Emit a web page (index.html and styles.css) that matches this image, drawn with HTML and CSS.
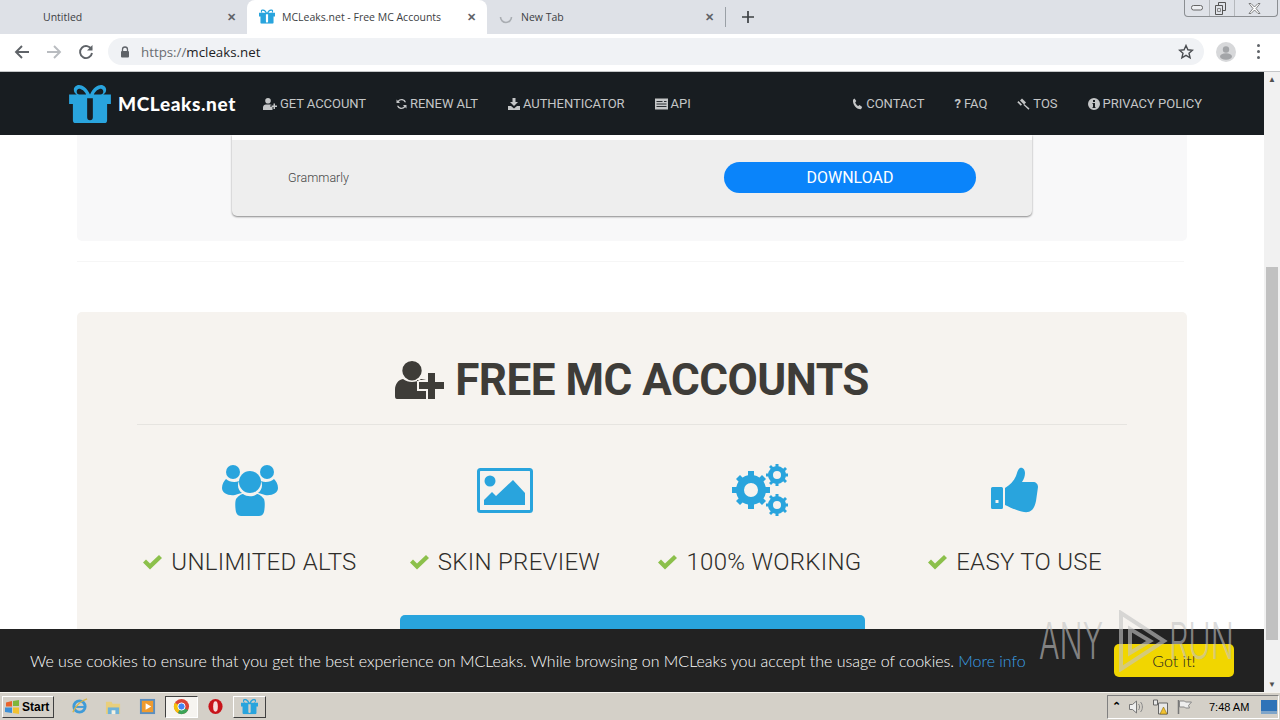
FILE: index.html
```html
<!DOCTYPE html>
<html lang="en">

<head>
    <meta charset="UTF-8" />
    <title>MCLeaks.net - Free MC Accounts</title>
    <link rel="stylesheet" href="styles.css">
</head>

<body>

    <div class="tabstrip">
        <div class="tab tab-first">
            <span class="tab-title tab-title-first">Untitled</span>
            <span class="tab-close">✕</span>
        </div>
        <div class="tab tab-active">
            <svg class="gift-small" viewBox="0 0 44 40"><use href="#gift" /></svg>
            <span class="tab-title">MCLeaks.net - Free MC Accounts</span>
            <span class="tab-close">✕</span>
        </div>
        <div class="tab tab-new">
            <svg class="spinner" viewBox="0 0 14 14"><path d="M1.5 7a5.5 5.5 0 0 0 11 0" fill="none" stroke="#a9adb2" stroke-width="1.6" /></svg>
            <span class="tab-title">New Tab</span>
            <span class="tab-close">✕</span>
        </div>
        <div class="tab-sep"></div>
        <svg class="new-tab" viewBox="0 0 12 12"><path d="M6 0v12M0 6h12" stroke="#3c4043" stroke-width="1.7" /></svg>
        <div class="win-buttons">
            <span class="win-btn win-min"><svg width="12" height="6" viewBox="0 0 12 6"><rect x=".5" y=".5" width="11" height="4.500" rx="2" fill="#eef0f3" stroke="#666" /></svg></span>
            <span class="win-btn win-max"><svg width="11" height="13" viewBox="0 0 11 13"><path d="M3.500 3V.5h7v8H8M.5 3.500h7v9h-7z" fill="none" stroke="#555" /><path d="M2.500 6.500h3v3h-3z" fill="none" stroke="#888" /></svg></span>
            <span class="win-btn win-close"><svg width="13" height="11" viewBox="0 0 13 11"><path d="M1 .5h2l3.500 3.500L10 .5h2L8 5.500l4 5h-2L6.500 7 3 10.500H1l4-5z" fill="#fff" stroke="#666" stroke-width=".8" /></svg></span>
        </div>
    </div>

    <div class="toolbar">
        <svg class="tool-icon" viewBox="0 0 16 16"><path d="M15 8H2M8 2 2 8l6 6" fill="none" stroke="#5f6368" stroke-width="1.900" /></svg>
        <svg class="tool-icon" viewBox="0 0 16 16"><path d="M1 8h13M8 2l6 6-6 6" fill="none" stroke="#b9bcc0" stroke-width="1.900" /></svg>
        <svg class="tool-icon" viewBox="0 0 16 16"><path d="M13.500 5.500A6 6 0 1 0 14 9" fill="none" stroke="#5f6368" stroke-width="1.900" /><path d="M14.500 1v5.500H9z" fill="#5f6368" /></svg>
        <div class="omnibox">
            <svg class="lock" viewBox="0 0 10 12"><path d="M2.500 5V3.500a2.500 2.500 0 0 1 5 0V5" fill="none" stroke="#5f6368" stroke-width="1.300" /><rect x="1" y="5" width="8" height="6.500" rx="1" fill="#5f6368" /></svg>
            <span class="url"><span class="url-scheme">https://</span>mcleaks.net</span>
            <svg class="star" viewBox="0 0 16 16"><path d="m8 1.500 1.900 4.300 4.600.4-3.500 3 1.100 4.600L8 11.400l-4.100 2.400L5 9.200l-3.500-3 4.600-.4z" fill="none" stroke="#4a4d51" stroke-width="1.400" /></svg>
        </div>
        <svg class="avatar" viewBox="0 0 20 20"><circle cx="10" cy="10" r="10" fill="#d7d8da" /><circle cx="10" cy="7.500" r="3.200" fill="#a3a5a8" /><ellipse cx="10" cy="14.500" rx="6" ry="3.200" fill="#a3a5a8" /></svg>
        <div class="kebab"><i></i><i></i><i></i></div>
    </div>

    <div class="viewport">
        <div class="site">
            <header class="navbar">
                <a class="logo">
                    <svg class="gift" viewBox="0 0 44 40"><use href="#gift" /></svg>
                    <span>MCLeaks.net</span>
                </a>
                <nav class="nav-left">
                    <a><svg viewBox="0 0 14 12"><path d="M5 0a2.800 2.800 0 1 1 0 5.600A2.800 2.800 0 0 1 5 0zM0 12V9.500C0 7.500 1.500 6.400 2.800 6.400h4.400c.7 0 1.300.2 1.800.6H7.500v2H9.500v3z" /><path d="M10.500 5.500h1.500v2h2V9h-2v2h-1.500V9h-2V7.500h2z" /></svg>GET ACCOUNT</a>
                    <a><svg viewBox="0.5 0 11 12"><path d="M10.600 4.300A4.800 4.800 0 0 0 2.300 2.700L1 1.400V5h3.600L3.300 3.700a3.400 3.400 0 0 1 5.800.6zM1.400 7.700a4.800 4.800 0 0 0 8.300 1.600l1.300 1.300V7H7.400l1.300 1.300a3.400 3.400 0 0 1-5.800-.6z" /></svg>RENEW ALT</a>
                    <a><svg viewBox="0.5 0 12 12"><path d="M5 0h3v4h2.500L6.500 8 2.500 4H5zM0 8h3.500l3 2.500 3-2.500H13v4H0z" /></svg>AUTHENTICATOR</a>
                    <a><svg viewBox="0 -0.5 13 12"><path d="M0 0h13v11H0z" /><path d="M1.500 3h6M1.500 5.500h10M1.500 8h10M9 3h2.500" stroke="#181d21" stroke-width=".9" /></svg>API</a>
                </nav>
                <nav class="nav-right">
                    <a><svg viewBox="0 0 11 12"><path d="M2.500.5 4.300 3 3.200 4.500c.5 1.400 1.600 2.800 3 3.600l1.400-1 2.600 2-1.200 2.200C4.200 11.500.5 6.500 1 1.800z" /></svg>CONTACT</a>
                    <a><span class="faq-mark">?</span>FAQ</a>
                    <a><svg viewBox="0 0 13 12"><path d="m5 .5 4 4-2 2-4-4zM1.500 3l3.500 3.500-1.200 1.200L.3 4.200zM7.200 6l5.300 4.500-1 1.200L6.500 7z" /></svg>TOS</a>
                    <a><svg viewBox="0 0 12 12"><path fill-rule="evenodd" d="M6 0a6 6 0 1 1 0 12A6 6 0 0 1 6 0zM5 2v2h2V2zM4.500 5v1H5v3h-.5v1h3V9H7V5z" /></svg>PRIVACY POLICY</a>
                </nav>
            </header>

            <main class="page">
                <section class="download-panel">
                    <div class="download-card">
                        <span class="download-name">Grammarly</span>
                        <a class="download-btn">DOWNLOAD</a>
                    </div>
                </section>

                <hr class="divider" />

                <section class="accounts">
                    <h1 class="accounts-title">
                        <svg viewBox="0 0 49 38"><path d="M17 0a9.700 9.700 0 1 1 0 19.400A9.700 9.700 0 0 1 17 0zM2 38c-1.500 0-2-1-2-3v-6c0-6 3-10 8-11 5 4 13 4 18 0 2 .5 4 .5 5 1H22v11h9v8z" /><path d="M33 12h7v9h9v7h-9v10h-7V28h-9v-7h9z" /></svg>
                        FREE MC ACCOUNTS
                    </h1>
                    <div class="features">
                        <div class="feature">
                            <svg class="feature-icon" viewBox="0 0 56 52"><circle cx="11" cy="8" r="7" /><circle cx="45" cy="8" r="7" /><path d="M4 15c3 3 9 4 13 2-2 4-1 9 3 12-3 1-5 1-7 2-7 1-13-2-13-7 0-4 2-7 4-9zM52 15c-3 3-9 4-13 2 2 4 1 9-3 12 3 1 5 1 7 2 7 1 13-2 13-7 0-4-2-7-4-9z" /><circle cx="28" cy="18" r="11" /><path d="M14 35c3-4 6-5 7-5 4 3 10 3 14 0 1 0 4 1 7 5 1 3 1 8 0 13-1 3-3 4-5 4H19c-2 0-4-1-5-4-1-5-1-10 0-13z" /></svg>
                            <div class="feature-label"><svg class="check" viewBox="0 0 21 16"><path d="M1 8.500 4 5.500 8 9.500 17 1l3 3L8 15.500z" /></svg>UNLIMITED ALTS</div>
                        </div>
                        <div class="feature">
                            <svg class="feature-icon" viewBox="0 -4 56 52"><rect x="1.500" y="1.500" width="53" height="42" rx="2" fill="none" stroke="#29a4dd" stroke-width="3" /><circle cx="13" cy="13" r="5.500" /><path d="M7 37v-5l8-8 4 4 17-16 12 13v12z" /></svg>
                            <div class="feature-label"><svg class="check" viewBox="0 0 21 16"><path d="M1 8.500 4 5.500 8 9.500 17 1l3 3L8 15.500z" /></svg>SKIN PREVIEW</div>
                        </div>
                        <div class="feature">
                            <svg class="feature-icon" viewBox="0 0 56 52"><circle cx="19" cy="26" r="11" fill="none" stroke="#29a4dd" stroke-width="8" /><path d="M16 7h6v6h-6zM16 39h6v6h-6zM0 23h6v6H0zM32 23h6v6h-6zM4 15l4-4 5 5-4 4zM25 36l4-4 5 5-4 4zM4 37l5-5 4 4-5 5zM25 16l5-5 4 4-5 5z" /><circle cx="45" cy="11" r="6.500" fill="none" stroke="#29a4dd" stroke-width="5" /><path d="M43.500 0h3v4h-3zM43.500 18h3v4h-3zM34 9.500h4v3h-4zM52 9.500h4v3h-4zM37 3l2-2 3 3-2 2zM50 16l2-2 3 3-2 2zM37 19l3-3 2 2-3 3zM50 6l3-3 2 2-3 3z" /><circle cx="45" cy="41" r="6.500" fill="none" stroke="#29a4dd" stroke-width="5" /><path d="M43.500 30h3v4h-3zM43.500 48h3v4h-3zM34 39.500h4v3h-4zM52 39.500h4v3h-4zM37 33l2-2 3 3-2 2zM50 46l2-2 3 3-2 2zM37 49l3-3 2 2-3 3zM50 36l3-3 2 2-3 3z" /></svg>
                            <div class="feature-label"><svg class="check" viewBox="0 0 21 16"><path d="M1 8.500 4 5.500 8 9.500 17 1l3 3L8 15.500z" /></svg>100% WORKING</div>
                        </div>
                        <div class="feature">
                            <svg class="feature-icon" viewBox="-4 -4 56 52"><path fill-rule="evenodd" d="M1.500 19h9a1.500 1.500 0 0 1 1.500 1.500v19a1.500 1.500 0 0 1-1.500 1.500h-9A1.500 1.500 0 0 1 0 39.500v-19A1.500 1.500 0 0 1 1.500 19zM4.500 32v3h3v-3z" /><path d="M14 20c5-3 9-7 11-12 1-3 2-7 4-8 3-1 5 2 5 5 0 3-1 6-3 9h11c3 0 5 2 5 5l-2 14c-1 5-3 10-8 11-5 1-15-3-23-7z" /></svg>
                            <div class="feature-label"><svg class="check" viewBox="0 0 21 16"><path d="M1 8.500 4 5.500 8 9.500 17 1l3 3L8 15.500z" /></svg>EASY TO USE</div>
                        </div>
                    </div>
                    <div class="get-btn"></div>
                </section>
            </main>
        </div>

        <div class="scrollbar">
            <span class="scroll-arrow">▲</span>
            <div class="scroll-track"><div class="scroll-thumb"></div></div>
            <span class="scroll-arrow">▼</span>
        </div>

        <div class="cookie-bar">
            <p class="cookie-text">We use cookies to ensure that you get the best experience on MCLeaks. While browsing on MCLeaks you accept the usage of cookies. <a>More info</a></p>
            <a class="cookie-btn">Got it!</a>
        </div>
    </div>

    <footer class="taskbar">
        <a class="start-btn">
            <svg viewBox="0 0 16 14"><path d="M1 2.500 7 1v5.500H1z" fill="#e8632c" /><path d="M8 1l6-1v6H8z" fill="#7fb53c" /><path d="M0 7.500h7V13l-7-1z" fill="#3d8fd6" /><path d="M8 7.500h6V14l-6-1z" fill="#f2c230" /></svg>
            Start
        </a>
        <div class="task-items">
            <span class="task-item"><svg viewBox="0 0 18 18"><circle cx="9" cy="9" r="6" fill="none" stroke="#3f9bd8" stroke-width="3" /><path d="M3 9.500h12" stroke="#3f9bd8" stroke-width="2" /><path d="M2 15C5 8 11 3 17 1" fill="none" stroke="#d9b64c" stroke-width="1.500" /></svg></span>
            <span class="task-item"><svg viewBox="0 0 18 18"><path d="M1 4h6l1 2h8v11H1z" fill="#e9cf7c" /><path d="M3 10h12v7H3z" fill="#6fb2d8" /><path d="M7 13h4v4H7z" fill="#f4f1e2" /></svg></span>
            <span class="task-item"><svg viewBox="0 0 18 18"><rect x="1" y="1" width="16" height="16" fill="#5b8fc0" /><rect x="3" y="3" width="12" height="12" fill="#ef9b2e" /><path d="M7 5.500v7l6-3.500z" fill="#fff" /></svg></span>
            <span class="task-item task-item-on"><svg viewBox="0 0 18 18"><circle cx="9" cy="9" r="8" fill="#db4437" /><path d="M9 9 16 13A8 8 0 0 1 5 16z" fill="#3ca457" /><path d="M9 9 5 16A8 8 0 0 1 2 5z" fill="#f4c20d" /><circle cx="9" cy="9" r="3.800" fill="#4285f4" stroke="#fff" /></svg></span>
            <span class="task-item"><svg viewBox="0 0 18 18"><ellipse cx="9" cy="9" rx="7.500" ry="8" fill="#c8141b" /><ellipse cx="9" cy="9" rx="2.500" ry="5.500" fill="#f6dcdc" /></svg></span>
            <span class="task-item task-item-app"><svg viewBox="0 0 44 40"><use href="#gift" /></svg></span>
        </div>
        <div class="tray">
            <span class="tray-chevron">⌃</span>
            <svg class="tray-icon" viewBox="0 0 16 16"><path d="M1 5.500h3L8 2v12L4 10.500H1z" fill="#eee" stroke="#777" /><path d="M10 5c1.500 1.500 1.500 4.500 0 6M12 3c2.500 2.500 2.500 7.500 0 10" fill="none" stroke="#888" /></svg>
            <svg class="tray-icon" viewBox="0 0 16 16"><path d="M1 1h4v5H1zM6 4h9v11H6z" fill="#e8e8e8" stroke="#666" /><path d="m11 8 3.500 7h-7z" fill="#f2c230" stroke="#8a6d10" stroke-width=".6" /></svg>
            <svg class="tray-icon" viewBox="0 0 16 16"><path d="M2 1v14" stroke="#777" stroke-width="1.500" /><path d="M3 2h5l1 1h6l-3 3.500 1 2.500H9L8 8H3z" fill="#eee" stroke="#888" /></svg>
            <span class="clock">7:48 AM</span>
            <span class="show-desktop"></span>
        </div>
    </footer>

    <div class="watermark">
        <span class="mark-word">ANY</span>
        <svg viewBox="0 0 50 62"><path d="M3 3v56l43-28zM12 19v24l20-12z" fill="none" stroke="currentColor" stroke-width="4" /></svg>
        <span class="mark-word">RUN</span>
    </div>

    <svg class="defs" width="0" height="0">
        <symbol id="gift" viewBox="0 0 44 40">
            <path fill="#29a4dd" fill-rule="evenodd" d="M22 10C19 3 14 0 10.500 0 7 0 5 2.500 5 5c0 2 1 4 3 5H0v10h4v17a3 3 0 0 0 3 3h30a3 3 0 0 0 3-3V20h4V10h-8c2-1 3-3 3-5 0-2.500-2-5-5.500-5C30 0 25 3 22 10zM10.500 4c2.500 0 6 2.500 7.500 6h-7c-2 0-3-1.500-3-3s1-3 2.500-3zm23 0C35 4 36 5.500 36 7s-1 3-3 3h-7c1.500-3.500 5-6 7.500-6zM19 14h6v20a3 3 0 0 1-6 0z" />
        </symbol>
    </svg>

</body>

</html>
```

FILE: styles.css
```css
* {
    box-sizing: border-box;
}

html,
body {
    height: 100%;
}

body {
    margin: 0;
    width: 1280px;
    height: 720px;
    overflow: hidden;
    display: flex;
    flex-direction: column;
    position: relative;
    background-color: #fff;
    font-family: 'Roboto', 'Liberation Sans', sans-serif;
}

.defs {
    position: absolute;
}

/* browser chrome */
.tabstrip {
    height: 34px;
    flex-shrink: 0;
    background-color: #dee1e7;
    display: flex;
    align-items: center;
    position: relative;
}

.tab {
    width: 240px;
    height: 34px;
    display: flex;
    align-items: center;
    padding: 0 11px 1px 12px;
    font-size: 10.5px;
    color: #3c4043;
    font-family: 'Open Sans', 'Liberation Sans', sans-serif;
}

.tab-first {
    width: 247px;
}

.tab-active {
    background-color: #fff;
    border-radius: 8px 8px 0 0;
}

.tab-new {
    width: 238px;
}

.tab-new .tab-title {
    margin-left: 8px;
}

.tab-title {
    flex: 1;
    margin-left: 7px;
    white-space: nowrap;
}

.tab-title-first {
    margin-left: 31px;
}

.tab-close {
    font-size: 11px;
    color: #5f6368;
    font-weight: bold;
}

.gift-small {
    width: 16px;
    height: 15px;
}

.spinner {
    width: 14px;
    height: 14px;
}

.tab-sep {
    width: 1px;
    height: 20px;
    background-color: #9aa0a6;
}

.new-tab {
    width: 12px;
    height: 12px;
    margin-left: 16px;
}

.win-buttons {
    position: absolute;
    top: 0;
    right: 2px;
    width: 94px;
    height: 17px;
    display: flex;
    background-color: #dfe2e8;
    border: 1px solid #8b8e92;
    border-top: none;
    border-radius: 0 0 4px 4px;
}

.win-btn {
    display: flex;
    align-items: center;
    justify-content: center;
    border-right: 1px solid #b5b8bc;
}

.win-min,
.win-max {
    width: 25px;
}

.win-max {
    padding-right: 3px;
}

.win-close {
    flex: 1;
    border-right: none;
    padding-right: 4px;
}

.toolbar {
    height: 38px;
    flex-shrink: 0;
    background-color: #fff;
    border-bottom: 1px solid #c4c6c8;
    display: flex;
    align-items: center;
    padding: 0 14px 2px;
}

.tool-icon {
    width: 16px;
    height: 16px;
    margin-right: 16px;
}

.omnibox {
    width: 1096px;
    height: 27px;
    margin-left: -2px;
    border-radius: 14px;
    background-color: #f0f2f5;
    display: flex;
    align-items: center;
    padding: 0 12px;
}

.lock {
    width: 10px;
    height: 12px;
    margin-right: 11px;
}

.url {
    flex: 1;
    font-family: 'Open Sans', 'Liberation Sans', sans-serif;
    font-size: 13.3px;
    color: #202124;
}

.url-scheme {
    color: #6a6e72;
}

.star {
    width: 16px;
    height: 16px;
    margin-right: -2px;
}

.avatar {
    width: 20px;
    height: 20px;
    margin-left: 12px;
}

.kebab {
    display: flex;
    flex-direction: column;
    gap: 3px;
    margin-left: 21px;
}

.kebab i {
    width: 3px;
    height: 3px;
    border-radius: 50%;
    background-color: #5f6368;
}

/* page area */
.viewport {
    flex: 1;
    display: flex;
    position: relative;
    min-height: 0;
}

.site {
    flex: 1;
    display: flex;
    flex-direction: column;
    overflow: hidden;
}

.navbar {
    height: 63px;
    flex-shrink: 0;
    background-color: #181d21;
    display: flex;
    align-items: center;
    padding: 0 62px 0 69px;
    color: #c4c6c7;
    font-size: 13px;
}

.logo {
    display: flex;
    align-items: center;
    color: #fff;
    font-family: 'Lato', 'Liberation Sans', sans-serif;
    font-weight: 900;
    font-size: 19px;
    letter-spacing: 0.6px;
    margin-right: 26px;
}

.gift {
    width: 42px;
    height: 38px;
    margin-right: 7px;
}

.nav-left,
.nav-right {
    display: flex;
    gap: 30px;
}

.nav-left {
    margin-left: 1px;
    letter-spacing: -0.05px;
}

.nav-right {
    margin-left: auto;
}

.navbar nav a {
    display: flex;
    align-items: center;
    gap: 3px;
    white-space: nowrap;
}

.navbar nav svg {
    height: 12px;
    width: auto;
    fill: #c4c6c7;
}

.faq-mark {
    font-weight: 700;
}

.page {
    flex: 1;
    background-color: #fff;
    padding: 0 77px;
}

.download-panel {
    height: 106px;
    background-color: #f8f8f9;
    border-radius: 0 0 5px 5px;
    padding: 0 155px;
}

.download-card {
    height: 81px;
    background-color: #eee;
    border-top: 5px solid #fff;
    border-radius: 0 0 5px 5px;
    box-shadow: 0 1px 2px rgba(0, 0, 0, 0.45);
    display: flex;
    align-items: center;
    justify-content: space-between;
    padding: 0 56px 2px;
}

.download-name {
    font-size: 12.5px;
    font-weight: 300;
    color: #444;
}

.download-btn {
    width: 252px;
    height: 31px;
    border-radius: 16px;
    background-color: #0a84fa;
    color: #fff;
    font-size: 16px;
    text-align: center;
    line-height: 31px;
}

.divider {
    border: none;
    border-top: 1px solid #f6f6f6;
    margin: 20px 3px 50px 0;
}

.accounts {
    height: 340px;
    background-color: #f6f3ef;
    border-radius: 5px;
    padding: 0 60px;
}

.accounts-title {
    margin: 0;
    height: 113px;
    border-bottom: 1px solid #e6e4e0;
    display: flex;
    align-items: center;
    justify-content: center;
    gap: 11px;
    font-size: 44px;
    font-weight: 700;
    color: #3e3c38;
    letter-spacing: -0.5px;
    padding-top: 23px;
}

.accounts-title svg {
    width: 49px;
    height: 38px;
    fill: #3e3c38;
}

.features {
    display: grid;
    grid-template-columns: repeat(4, 255px);
    padding-top: 39px;
    margin: 0 -15px;
}

.feature {
    display: flex;
    flex-direction: column;
    align-items: center;
}

.feature-icon {
    width: 56px;
    height: 52px;
    fill: #29a4dd;
}

.feature-label {
    margin-top: 32px;
    display: flex;
    align-items: center;
    gap: 8px;
    font-size: 24px;
    font-weight: 300;
    letter-spacing: 0.3px;
    color: #2f2d2a;
    white-space: nowrap;
}

.check {
    width: 21px;
    height: 16px;
    fill: #8cc04b;
}

.get-btn {
    width: 465px;
    height: 60px;
    margin: 39px auto 0;
    background-color: #29a4dd;
    border-radius: 5px;
}

.scrollbar {
    width: 16px;
    flex-shrink: 0;
    background-color: #f1f1f1;
    display: flex;
    flex-direction: column;
    align-items: center;
}

.scroll-arrow {
    height: 15px;
    font-size: 8px;
    line-height: 15px;
    color: #505050;
}

.scroll-track {
    flex: 1;
    width: 100%;
    padding: 180px 2px 0;
}

.scroll-thumb {
    height: 373px;
    background-color: #c1c1c1;
}

.cookie-bar {
    position: absolute;
    left: 0;
    right: 16px;
    bottom: 0;
    height: 63px;
    background-color: #222;
    display: flex;
    align-items: center;
    justify-content: space-between;
    padding: 0 30px;
    font-family: 'Lato', 'Liberation Sans', sans-serif;
    font-weight: 300;
}

.cookie-text {
    margin: 0;
    font-size: 16px;
    letter-spacing: -0.023px;
    color: #fff;
    white-space: nowrap;
}

.cookie-text a {
    color: #3aa0e8;
}

.cookie-btn {
    width: 120px;
    height: 33px;
    border-radius: 5px;
    background-color: #f1d600;
    color: #222;
    text-align: center;
    font-size: 16px;
    line-height: 33px;
}

/* taskbar */
.taskbar {
    height: 28px;
    flex-shrink: 0;
    background-color: #d4d0c8;
    border-top: 1px solid #f5f3ee;
    display: flex;
    align-items: center;
    padding: 0 0 0 2px;
}

.start-btn {
    width: 52px;
    height: 22px;
    display: flex;
    align-items: center;
    gap: 1px;
    padding-left: 2px;
    background-color: #d4d0c8;
    border: 1px solid;
    border-color: #fff #404040 #404040 #fff;
    font-family: 'Liberation Sans', sans-serif;
    font-weight: 700;
    font-size: 12px;
    color: #000;
}

.start-btn svg {
    width: 16px;
    height: 14px;
}

.task-items {
    display: flex;
    align-items: center;
    margin-left: 9px;
}

.task-item {
    width: 33px;
    height: 22px;
    margin-right: 1px;
    display: flex;
    align-items: center;
    justify-content: center;
}

.task-item svg {
    width: 17px;
    height: 17px;
}

.task-item-on {
    background-color: #f6f4f0;
    border: 1px solid;
    border-color: #404040 #fff #fff #404040;
}

.task-item-app {
    border: 1px solid;
    border-color: #fff #404040 #404040 #fff;
}

.tray {
    margin-left: auto;
    margin-right: 1px;
    width: 172px;
    height: 24px;
    display: flex;
    align-items: center;
    gap: 7px;
    padding-left: 3px;
    border: 1px solid;
    border-color: #808080 #fff #fff #808080;
}

.tray-chevron {
    width: 10px;
    font-size: 11px;
    font-weight: bold;
    text-align: center;
    color: #000;
}

.tray-icon {
    width: 17px;
    height: 16px;
}

.clock {
    margin-left: 9px;
    font-family: 'Liberation Sans', sans-serif;
    font-size: 11px;
    color: #000;
    white-space: nowrap;
}

.show-desktop {
    width: 16px;
    height: 14px;
    margin-left: auto;
    margin-right: 1px;
    background-color: #2f73b8;
    border-bottom: 3px solid #7fa5c9;
}

/* sandbox mark over the screen */
.watermark {
    position: absolute;
    left: 1039px;
    top: 610px;
    height: 62px;
    display: flex;
    align-items: center;
    color: rgba(195, 195, 195, 0.62);
    font-family: 'Inter', 'Liberation Sans', sans-serif;
    font-size: 50px;
    font-weight: 300;
    pointer-events: none;
}

.mark-word {
    width: 62px;
    transform: scaleX(0.61);
    transform-origin: left center;
    white-space: nowrap;
}

.watermark svg {
    width: 50px;
    height: 62px;
    margin: 0 1px 0 17px;
}
```
